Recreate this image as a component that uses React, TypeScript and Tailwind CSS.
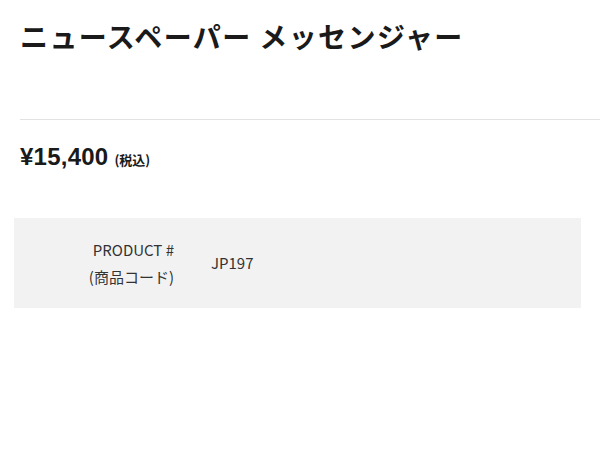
import { FC } from 'react';

const App: FC = () => {
    return (
        <div className="min-h-[450px] bg-white text-[#222]" style={{ fontFamily: '"Liberation Sans", "Noto Sans CJK JP", sans-serif' }}>
            <section className="pt-[16px]">
                <h1 className="pl-[20px] text-[28px] leading-[40px] tracking-[0.05em] font-bold text-[#1a1a1a] font-['Noto_Sans_CJK_JP',sans-serif]">
                    ニュースペーパー メッセンジャー
                </h1>
                <div className="ml-[20px] mt-[63px] border-t border-[#e2e2e2]" />
                <div className="pl-[20px] mt-[22px] flex items-baseline gap-[6px] text-[#1a1a1a]">
                    <span className="text-[24px] leading-[30px] font-bold tracking-[0.01em]">¥15,400</span>
                    <span className="text-[13px] font-bold font-['Noto_Sans_CJK_JP',sans-serif]">(税込)</span>
                </div>
                <div className="ml-[14px] mt-[46px] w-[567px] h-[90px] bg-[#f2f2f2] flex items-center font-['Noto_Sans_CJK_JP',sans-serif] text-[#333]">
                    <table>
                        <tbody>
                            <tr>
                                <th className="w-[160px] pr-0 text-right font-normal text-[15px] leading-[27px]">
                                    PRODUCT #
                                    <br />
                                    (商品コード)
                                </th>
                                <td className="pl-[37px] text-[15px] align-middle">JP197</td>
                            </tr>
                        </tbody>
                    </table>
                </div>
            </section>
        </div>
    );
};
export default App;
